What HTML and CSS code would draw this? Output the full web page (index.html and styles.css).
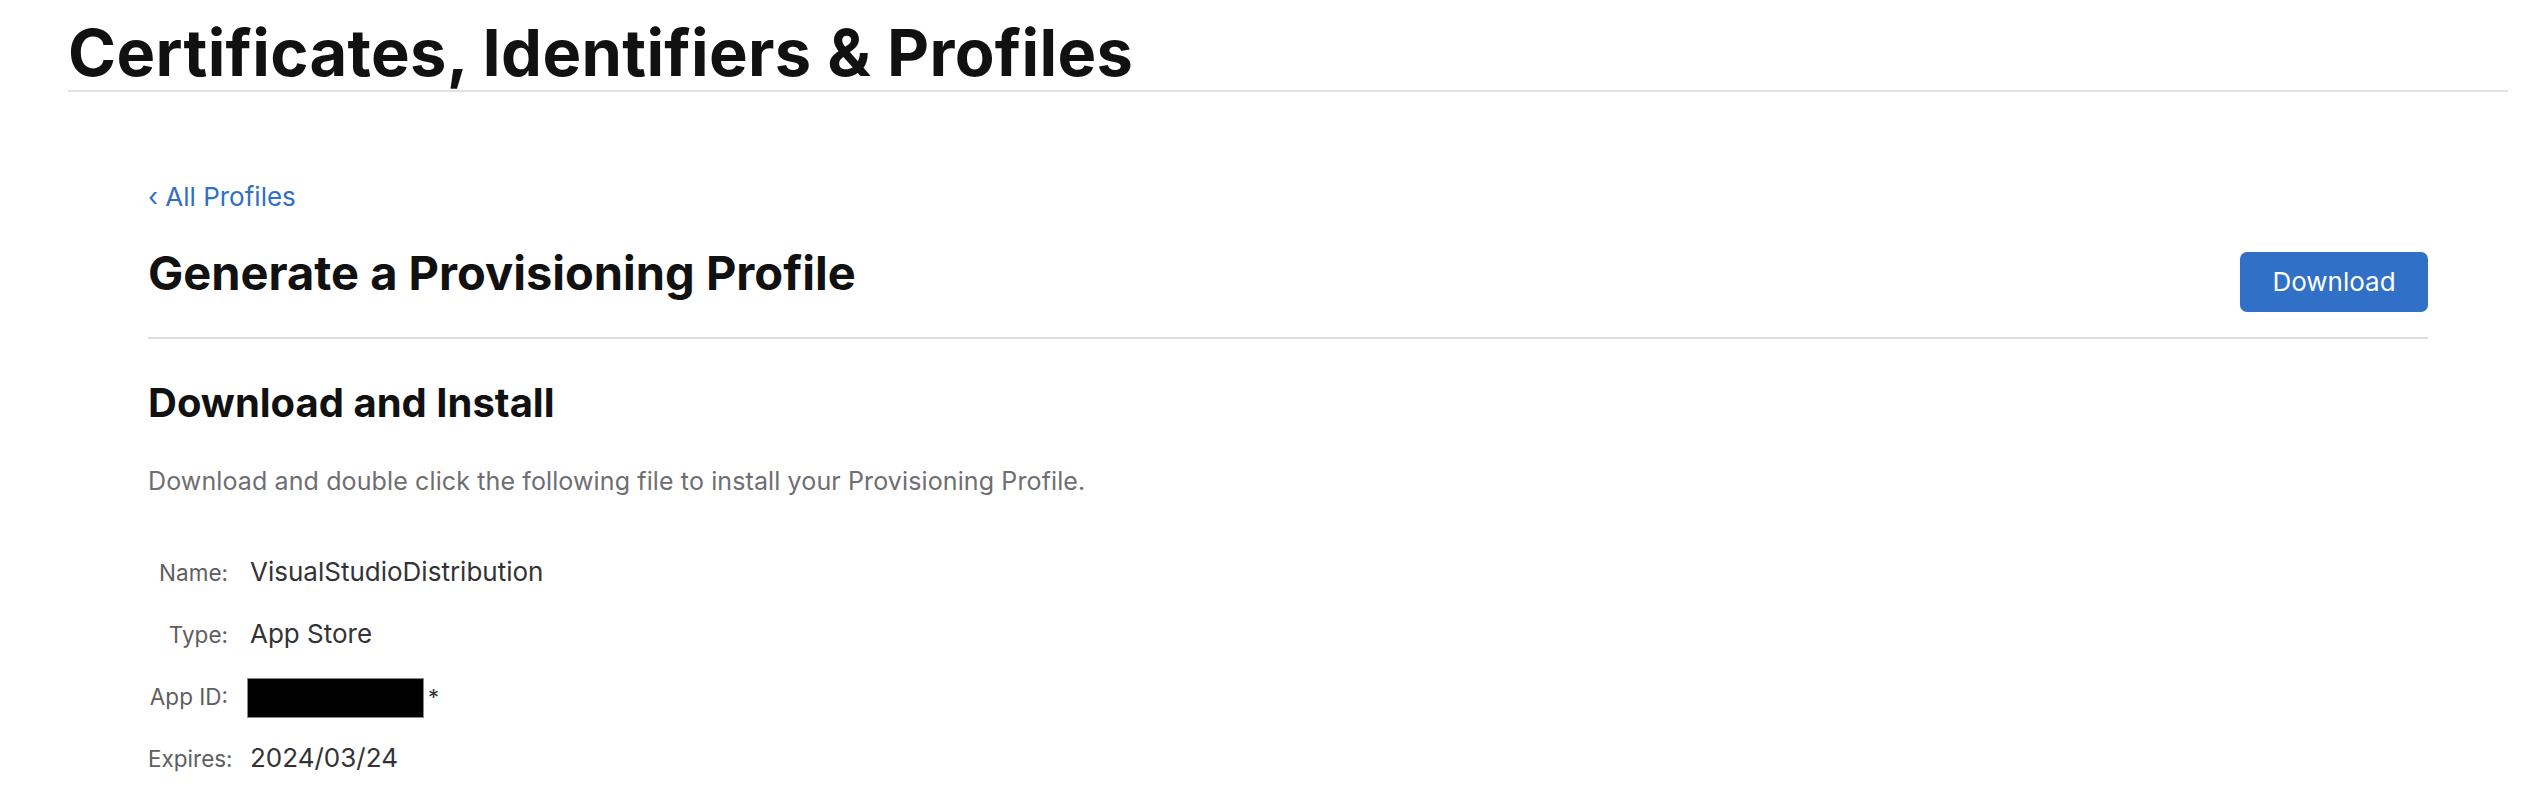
FILE: index.html
```html
<!DOCTYPE html>
<html lang="en">
<head>
<meta charset="utf-8">
<title>Certificates, Identifiers &amp; Profiles</title>
<link rel="stylesheet" href="styles.css">
</head>
<body>
<header class="site-header">
  <h1 class="site-title">Certificates, Identifiers &amp; Profiles</h1>
</header>
<main class="content">
  <a class="back-link" href="#"><span class="chev">‹</span> All Profiles</a>
  <div class="title-row">
    <h2 class="page-title">Generate a Provisioning Profile</h2>
    <button class="btn-primary" type="button">Download</button>
  </div>
  <h3 class="section-title">Download and Install</h3>
  <p class="section-desc">Download and double click the following file to install your Provisioning Profile.</p>
  <dl class="details">
    <div class="detail-row"><dt>Name:</dt><dd>VisualStudioDistribution</dd></div>
    <div class="detail-row"><dt>Type:</dt><dd>App Store</dd></div>
    <div class="detail-row"><dt>App ID:</dt><dd><span class="redacted"></span><span class="star">*</span></dd></div>
    <div class="detail-row"><dt>Expires:</dt><dd>2024/03/24</dd></div>
  </dl>
</main>
</body>
</html>
```
FILE: styles.css
```css
html, body {
  margin: 0;
  padding: 0;
  background: #ffffff;
}
body {
  font-family: Inter, "Noto Sans", "Liberation Sans", sans-serif;
  color: #1d1d1f;
}
.site-header {
  margin: 0 28px 0 68px;
  padding-top: 15px;
  border-bottom: 2px solid #e2e2e2;
}
.site-title {
  margin: 0;
  font-size: 65px;
  line-height: 75px;
  font-weight: 700;
  letter-spacing: 0.005em;
  color: #111111;
}
.content {
  padding: 90px 108px 0 148px;
}
.back-link {
  display: block;
  font-size: 26px;
  line-height: 30px;
  color: #2f6fc6;
  text-decoration: none;
}
.title-row {
  margin-top: 35px;
  display: flex;
  justify-content: space-between;
  align-items: flex-start;
  padding-bottom: 25px;
  border-bottom: 2px solid #dedede;
}
.page-title {
  margin: 0;
  font-size: 47px;
  line-height: 52px;
  font-weight: 700;
  color: #111111;
}
.btn-primary {
  margin-top: 5px;
  width: 188px;
  height: 60px;
  border: 0;
  border-radius: 7px;
  background: #3070c6;
  color: #ffffff;
  font-family: Inter, "Noto Sans", sans-serif;
  font-size: 26px;
  font-weight: 400;
  line-height: 58px;
  padding: 0;
}
.section-title {
  margin: 44px 0 0;
  font-size: 40px;
  line-height: 40px;
  font-weight: 700;
  color: #111111;
}
.section-desc {
  margin: 42px 0 0;
  font-size: 25px;
  line-height: 32px;
  letter-spacing: 0.12px;
  color: #6e6e73;
}
.details {
  margin: 44px 0 0;
}
.detail-row {
  display: flex;
  align-items: baseline;
  height: 62px;
  line-height: 62px;
}
.detail-row dt {
  width: 80px;
  text-align: right;
  font-size: 22.5px;
  color: #5e5e62;
}
.detail-row dd {
  margin: 0 0 0 22px;
  font-size: 26px;
  color: #333336;
}
.redacted {
  display: inline-block;
  margin-left: -3px;
  width: 177px;
  height: 40px;
  background: #000000;
  vertical-align: middle;
  box-shadow: 0 0 0 1px #8a8a8a inset;
}
.star {
  margin-left: 4px;
  font-size: 22px;
}
```
